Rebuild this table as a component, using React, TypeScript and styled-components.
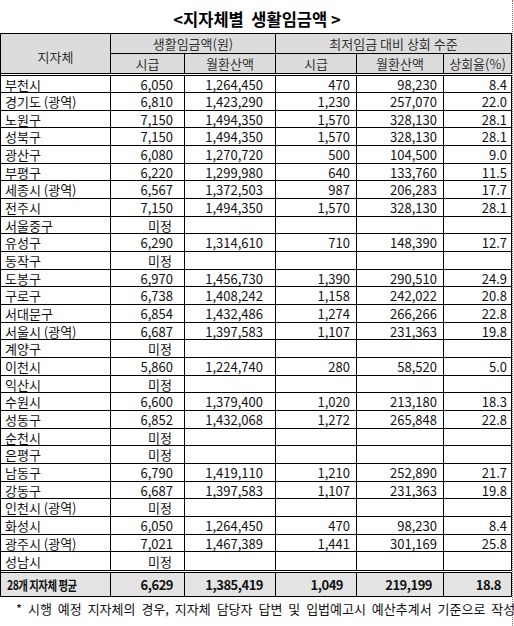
import React from 'react';
import styled, { createGlobalStyle } from 'styled-components';

const GlobalStyle = createGlobalStyle`
  html, body { margin: 0; padding: 0; background: #fff; }
  body { font-family: "Noto Sans CJK KR", "Noto Sans", sans-serif; }
  * { box-sizing: border-box; }
`;

const COLS = '110px 74px 91px 81px 87px 68px';
const PAD = [4, 11, 12, 6, 6, 4];
const TOTAL_PAD = [6, 11, 12, 13, 11, 10];

type RowData = string[];
const ROWS: RowData[] = [
  ['부천시', '6,050', '1,264,450', '470', '98,230', '8.4'],
  ['경기도 (광역)', '6,810', '1,423,290', '1,230', '257,070', '22.0'],
  ['노원구', '7,150', '1,494,350', '1,570', '328,130', '28.1'],
  ['성북구', '7,150', '1,494,350', '1,570', '328,130', '28.1'],
  ['광산구', '6,080', '1,270,720', '500', '104,500', '9.0'],
  ['부평구', '6,220', '1,299,980', '640', '133,760', '11.5'],
  ['세종시 (광역)', '6,567', '1,372,503', '987', '206,283', '17.7'],
  ['전주시', '7,150', '1,494,350', '1,570', '328,130', '28.1'],
  ['서울중구', '미정'],
  ['유성구', '6,290', '1,314,610', '710', '148,390', '12.7'],
  ['동작구', '미정'],
  ['도봉구', '6,970', '1,456,730', '1,390', '290,510', '24.9'],
  ['구로구', '6,738', '1,408,242', '1,158', '242,022', '20.8'],
  ['서대문구', '6,854', '1,432,486', '1,274', '266,266', '22.8'],
  ['서울시 (광역)', '6,687', '1,397,583', '1,107', '231,363', '19.8'],
  ['계양구', '미정'],
  ['이천시', '5,860', '1,224,740', '280', '58,520', '5.0'],
  ['익산시', '미정'],
  ['수원시', '6,600', '1,379,400', '1,020', '213,180', '18.3'],
  ['성동구', '6,852', '1,432,068', '1,272', '265,848', '22.8'],
  ['순천시', '미정'],
  ['은평구', '미정'],
  ['남동구', '6,790', '1,419,110', '1,210', '252,890', '21.7'],
  ['강동구', '6,687', '1,397,583', '1,107', '231,363', '19.8'],
  ['인천시 (광역)', '미정'],
  ['화성시', '6,050', '1,264,450', '470', '98,230', '8.4'],
  ['광주시 (광역)', '7,021', '1,467,389', '1,441', '301,169', '25.8'],
  ['성남시', '미정'],
];

const TOTAL = ['28개 지자체 평균', '6,629', '1,385,419', '1,049', '219,199', '18.8'];

const Page = styled.div`
  position: relative;
  width: 514px;
  height: 626px;
  overflow: hidden;
  background: #fff;
`;

const Title = styled.h1`
  margin: 0;
  width: 514px;
  height: 33px;
  padding-top: 10px;
  font-size: 16.5px;
  line-height: 18px;
  font-weight: 700;
  text-align: center;
  color: #000;
  white-space: pre;
`;

const Table = styled.div`
  width: 512px;
  border-left: 1px solid #000;
  border-top: 1px solid #000;
  border-bottom: 1px solid #000;
`;

const Head = styled.div`
  display: grid;
  grid-template-columns: ${COLS};
  grid-template-rows: 20px 19px;
  background: #dcdcdc;
`;

const HeadCell = styled.div<{ $col: string; $row: string; $line?: boolean; $shift?: number }>`
  grid-column: ${(p) => p.$col};
  grid-row: ${(p) => p.$row};
  display: flex;
  align-items: center;
  justify-content: center;
  padding-top: ${(p) => p.$shift ?? 0}px;
  border-right: 1px solid #000;
  border-bottom: ${(p) => (p.$line ? '1px solid #000' : 'none')};
  font-size: 13px;
  line-height: 1;
  color: #333;
  white-space: nowrap;
  overflow: hidden;
`;

const Body = styled.div`
  border-top: 3px double #000;
`;

const Row = styled.div<{ $h: number; $last?: boolean }>`
  display: grid;
  grid-template-columns: ${COLS};
  height: ${(p) => p.$h}px;
  border-bottom: ${(p) => (p.$last ? 'none' : '1px solid #000')};
`;

const Cell = styled.div<{ $left?: boolean; $pad: number }>`
  display: flex;
  align-items: center;
  justify-content: ${(p) => (p.$left ? 'flex-start' : 'flex-end')};
  padding: 0 ${(p) => p.$pad}px;
  border-right: 1px solid #000;
  font-size: 13px;
  line-height: 13px;
  color: #111;
  white-space: nowrap;
  overflow: hidden;
`;

const TotalRow = styled.div`
  display: grid;
  grid-template-columns: ${COLS};
  height: 26px;
  border-top: 3px double #000;
  background: #e3e3e3;
  background-clip: padding-box;
`;

const TotalCell = styled(Cell)`
  font-weight: 700;
  letter-spacing: -0.5px;
  color: #111;
`;

const TotalLabel = styled.span`
  display: inline-block;
  transform: scaleX(0.8);
  transform-origin: left center;
  letter-spacing: -0.6px;
`;

const Note = styled.p`
  margin: 0;
  padding: 3px 0 0 16px;
  font-size: 13px;
  line-height: 18px;
  word-spacing: 3px;
  color: #111;
  white-space: nowrap;
`;

const PageBreak = styled.div`
  position: absolute;
  top: 0;
  left: 512px;
  width: 1px;
  height: 626px;
  border-left: 1px dotted #e8464a;
`;

function rowHeights(): number[] {
  const rest: number[] = [];
  const n = 27;
  const total = 477;
  for (let j = 0; j < n; j++) {
    rest.push(Math.round(((j + 1) * total) / n) - Math.round((j * total) / n));
  }
  return [17, ...rest];
}

export default function App() {
  const heights = rowHeights();
  return (
    <Page>
      <GlobalStyle />
      <Title>{'<지자체별  생활임금액 >'}</Title>
      <Table>
        <Head>
          <HeadCell $col="1" $row="1 / span 2" $shift={5}>지자체</HeadCell>
          <HeadCell $col="2 / span 2" $row="1" $line>생활임금액(원)</HeadCell>
          <HeadCell $col="4 / span 3" $row="1" $line>최저임금 대비 상회 수준</HeadCell>
          <HeadCell $col="2" $row="2">시급</HeadCell>
          <HeadCell $col="3" $row="2">월환산액</HeadCell>
          <HeadCell $col="4" $row="2">시급</HeadCell>
          <HeadCell $col="5" $row="2">월환산액</HeadCell>
          <HeadCell $col="6" $row="2">상회율(%)</HeadCell>
        </Head>
        <Body>
          {ROWS.map((r, i) => (
            <Row key={i} $h={heights[i]} $last={i === ROWS.length - 1}>
              {[0, 1, 2, 3, 4, 5].map((c) => (
                <Cell key={c} $left={c === 0} $pad={r[c] === '미정' ? 12 : PAD[c]}>
                  {r[c] ?? ''}
                </Cell>
              ))}
            </Row>
          ))}
        </Body>
        <TotalRow>
          {TOTAL.map((v, c) => (
            <TotalCell key={c} $left={c === 0} $pad={TOTAL_PAD[c]}>
              {c === 0 ? <TotalLabel>{v}</TotalLabel> : v}
            </TotalCell>
          ))}
        </TotalRow>
      </Table>
      <Note>* 시행 예정 지자체의 경우, 지자체 담당자 답변 및 입법예고시 예산추계서 기준으로 작성</Note>
      <PageBreak />
    </Page>
  );
}
